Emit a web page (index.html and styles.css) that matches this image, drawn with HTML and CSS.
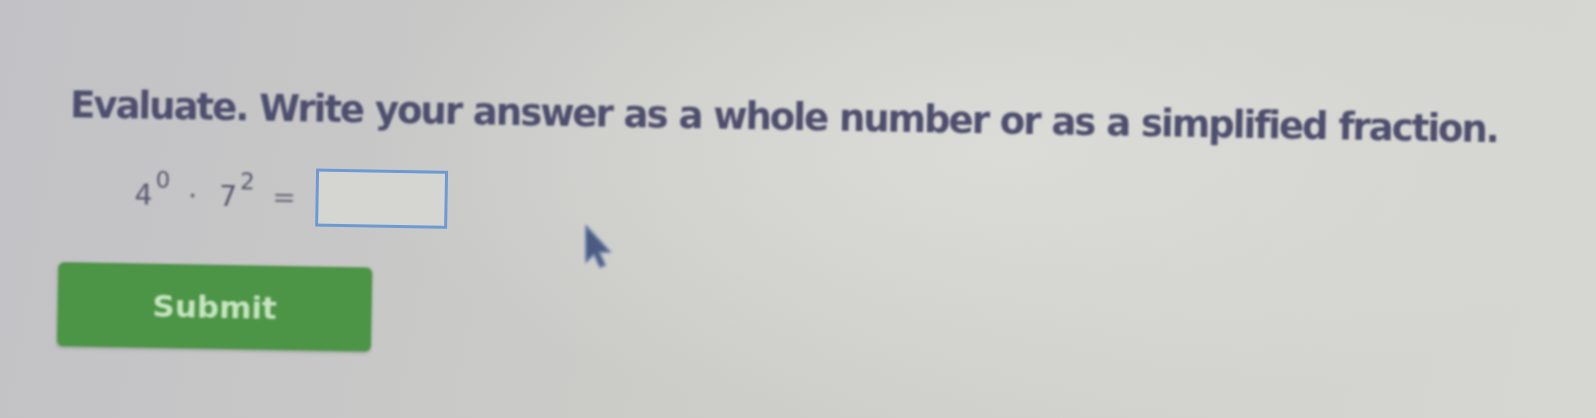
FILE: index.html
```html
<!DOCTYPE html>
<html>
<head>
<meta charset="utf-8">
<link rel="stylesheet" href="styles.css">
</head>
<body>
<div class="screen">
  <div class="content">
    <p class="question">Evaluate. Write your answer as a whole number or as a simplified fraction.</p>
    <div class="equation">
      <span class="expr">4<sup>0</sup><span class="dot">·</span>7<sup>2</sup><span class="eq">=</span></span>
      <span class="answer"></span>
    </div>
    <button class="submit">Submit</button>
  </div>
  <svg class="cursor" width="34" height="46" viewBox="0 0 34 46">
    <path d="M4 2 L4 38 L12 30 L18 43 L23 41 L17 28 L28 28 Z" fill="#4a5a80" stroke="#6e82a8" stroke-width="2" stroke-linejoin="round"/>
  </svg>
</div>
</body>
</html>
```
FILE: styles.css
```css
html, body {
  margin: 0;
  padding: 0;
}
body {
  width: 1596px;
  height: 418px;
  overflow: hidden;
}
.screen {
  position: relative;
  width: 1596px;
  height: 418px;
  background:
    radial-gradient(ellipse 900px 400px at 1000px 150px, rgba(222,222,218,0.8), rgba(222,222,218,0) 70%),
    linear-gradient(100deg, #c2c2c6 0%, #cbcbc8 40%, #d2d2ce 75%, #d6d6d2 100%);
  font-family: "DejaVu Sans", Verdana, sans-serif;
  overflow: hidden;
}
.content {
  padding: 82px 0 0 72px;
  transform: rotate(1deg);
  transform-origin: 0 0;
  display: flex;
  flex-direction: column;
  align-items: flex-start;
}
.question {
  margin: 0;
  font-size: 37px;
  font-weight: bold;
  color: #4e4e6e;
  letter-spacing: -2px;
  word-spacing: 1px;
  white-space: nowrap;
  filter: blur(0.8px);
}
.equation {
  display: flex;
  align-items: center;
  gap: 20px;
  margin: 38px 0 0 66px;
}
.expr {
  font-size: 28px;
  color: #56566e;
  filter: blur(0.8px);
}
.expr sup {
  font-size: 23px;
  vertical-align: 17px;
  line-height: 0;
  margin-left: 3px;
}
.dot {
  margin: 0 22px 0 18px;
}
.eq {
  margin-left: 18px;
  color: #6a6a7a;
}
.answer {
  display: block;
  width: 126px;
  height: 52px;
  border: 3px solid #6d9ad2;
  background: #d5d6d2;
  filter: blur(0.7px);
}
.submit {
  margin: 40px 0 0 -9px;
  width: 314px;
  height: 84px;
  border: none;
  border-radius: 6px;
  background: #4c9446;
  color: #c6e4c0;
  font-family: "DejaVu Sans", Verdana, sans-serif;
  font-size: 31px;
  font-weight: bold;
  filter: blur(0.9px);
  box-shadow: 0 2px 3px rgba(60,90,60,0.3);
}
.cursor {
  position: absolute;
  left: 582px;
  top: 224px;
  filter: blur(1.5px);
}
```
